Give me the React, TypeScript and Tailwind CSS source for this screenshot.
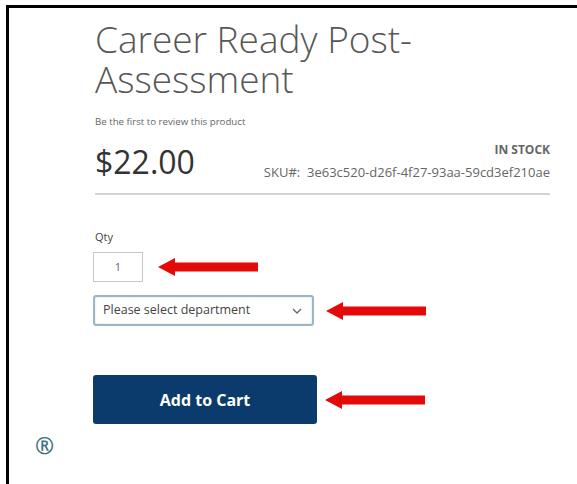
import React from "react";

function RedArrow({ width = 100 }: { width?: number }) {
  return (
    <svg width={width} height={18} viewBox={`0 0 ${width} 18`} className="block shrink-0">
      <polygon
        points={`0,9 17,0 17,4.5 ${width},4.5 ${width},13.5 17,13.5 17,18`}
        fill="#e50a0a"
      />
    </svg>
  );
}

export default function App() {
  const font = { fontFamily: '"Open Sans", "Noto Sans", sans-serif' };
  return (
    <div className="w-[577px] h-[484px] bg-white overflow-hidden pt-[5px] pl-[6px] flex" style={font}>
      <div className="flex-1 flex flex-col border-t-[3px] border-l-[3px] border-black">
        <div className="pl-[86px] pr-[27px] flex flex-col">
          <h1 className="mt-[11px] text-[37px] leading-[40px] font-light text-[#575757]">
            Career Ready Post-
            <br />
            Assessment
          </h1>
          <div className="mt-[16px] text-[9.7px] leading-[14px] text-[#666]">
            Be the first to review this product
          </div>
          <div className="mt-[10px] flex items-start justify-between">
            <div className="mt-[3px] text-[32px] leading-[40px] text-[#333]">$22.00</div>
            <div className="flex flex-col items-end leading-[22px] text-[#666]">
              <span className="font-bold text-[12px]">IN STOCK</span>
              <span className="text-[13px]">
                SKU#:&nbsp;&nbsp;3e63c520-d26f-4f27-93aa-59cd3ef210ae
              </span>
            </div>
          </div>
          <div className="mt-[10px] h-[2px] bg-[#d4d4d4]" />
          <div className="mt-[35px] text-[11px] leading-[14px] text-[#444]">Qty</div>
          <div className="mt-[8px] flex items-center gap-[15px] -ml-[2px]">
            <div className="w-[50px] h-[30px] border border-[#c8c8c8] flex items-center justify-center text-[11px] text-[#666]">
              1
            </div>
            <RedArrow width={100} />
          </div>
          <div className="mt-[13px] flex items-center gap-[12px] -ml-[2px]">
            <div className="w-[221px] h-[31px] border-[2px] border-[#9db6c6] rounded-[3px] shadow-[inset_0_0_2px_rgba(80,120,150,0.35)] flex items-center justify-between pl-[8px] pr-[10px] text-[12.5px] text-[#444]">
              <span>Please select department</span>
              <svg width="10" height="6" viewBox="0 0 10 6" className="block">
                <path d="M1 1 L5 5 L9 1" fill="none" stroke="#666" strokeWidth="1.3" />
              </svg>
            </div>
            <RedArrow width={100} />
          </div>
          <div className="mt-[49px] flex items-center gap-[8px] -ml-[2px]">
            <div className="w-[224px] h-[49px] bg-[#0b3b6c] rounded-[3px] flex items-center justify-center text-white font-bold text-[16px]">
              Add to Cart
            </div>
            <RedArrow width={100} />
          </div>
        </div>
        <div className="pl-[26px] mt-[10px] text-[23px] leading-[22px] font-semibold text-[#3d6d80]">®</div>
      </div>
    </div>
  );
}
